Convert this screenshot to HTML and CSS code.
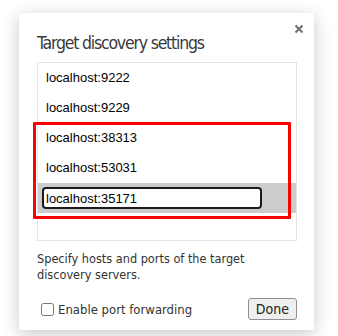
FILE: index.html
```html
<!DOCTYPE html>
<html lang="en">
<head>
    <meta charset="UTF-8">
    <meta name="viewport" content="width=device-width, initial-scale=1.0">
    <title>Target discovery settings</title>
    <link rel="stylesheet" href="styles.css">
</head>
<body>
    <div class="dialog">
        <button class="close" aria-label="Close">
            <svg width="10" height="10" viewBox="0 0 10 10">
                <path d="M1.5 1.5 L8.5 8.5 M8.5 1.5 L1.5 8.5" stroke="#6e6e6e" stroke-width="2" fill="none"/>
            </svg>
        </button>
        <h1 class="title">Target discovery settings</h1>

        <div class="list-wrap">
            <ul class="list">
                <li class="item">localhost:9222</li>
                <li class="item">localhost:9229</li>
                <li class="item">localhost:38313</li>
                <li class="item">localhost:53031</li>
                <li class="item editing"><input class="edit" type="text" value="localhost:35171"></li>
            </ul>
            <div class="highlight"></div>
        </div>

        <p class="help">Specify hosts and ports of the target discovery servers.</p>

        <div class="footer">
            <label class="check"><input type="checkbox"> Enable port forwarding</label>
            <button class="done">Done</button>
        </div>
    </div>
</body>
</html>
```

FILE: styles.css
```css
body {
    margin: 0;
    background: #ffffff;
    font-family: 'DejaVu Sans Condensed', 'Noto Sans', sans-serif;
    height: 336px;
    overflow: hidden;
}

.dialog {
    position: relative;
    box-sizing: border-box;
    width: 295px;
    height: 317px;
    margin: 13px 0 0 19px;
    padding: 0 17px 0 18px;
    background: #fff;
    border-radius: 3px;
    box-shadow: 0 4px 18px rgba(0, 0, 0, 0.22);
    display: flex;
    flex-direction: column;
}

.close {
    position: absolute;
    top: 11px;
    right: 10px;
    width: 10px;
    height: 10px;
    padding: 0;
    border: none;
    background: none;
    line-height: 0;
}

.title {
    margin: 0;
    padding-top: 17px;
    font-size: 17.5px;
    letter-spacing: -1.2px;
    font-weight: normal;
    line-height: 26px;
    color: #3a3a3a;
    height: 32px;
}

.list-wrap {
    position: relative;
}

.list {
    list-style: none;
    margin: 0;
    padding: 0 0 27px 0;
    border: 1px solid #e4e4e4;
    font-family: 'Liberation Sans', Arial, sans-serif;
    font-size: 13px;
    color: #000;
}

.item {
    height: 30px;
    line-height: 30px;
    padding-left: 8px;
}

.editing {
    background: #cccccc;
    padding-left: 4px;
    display: flex;
    align-items: center;
}

.edit {
    box-sizing: border-box;
    width: 220px;
    height: 22px;
    margin: 0;
    padding: 0 0 0 2px;
    border: 2px solid #1a1a1a;
    border-radius: 4px;
    font-family: 'Liberation Sans', Arial, sans-serif;
    font-size: 13px;
    color: #000;
    outline: none;
}

.highlight {
    position: absolute;
    left: -4px;
    top: 60px;
    width: 258px;
    height: 97px;
    box-sizing: border-box;
    border: 3px solid #ff0000;
    border-radius: 1px;
}

.help {
    margin: 10px 0 0;
    font-size: 12.6px;
    line-height: 16px;
    color: #333;
}

.footer {
    display: flex;
    align-items: center;
    justify-content: space-between;
    margin-top: 15px;
}

.check {
    display: flex;
    align-items: center;
    font-size: 13px;
    color: #333;
    margin-left: 4px;
}

.check input {
    width: 13px;
    height: 13px;
    margin: 0 4px 0 0;
}

.done {
    font-family: 'DejaVu Sans Condensed', 'Noto Sans', sans-serif;
    font-size: 14px;
    height: 22px;
    padding: 0 7px;
    background: #efefef;
    border: 1px solid #8f8f8f;
    border-radius: 3px;
    color: #222;
}
```
